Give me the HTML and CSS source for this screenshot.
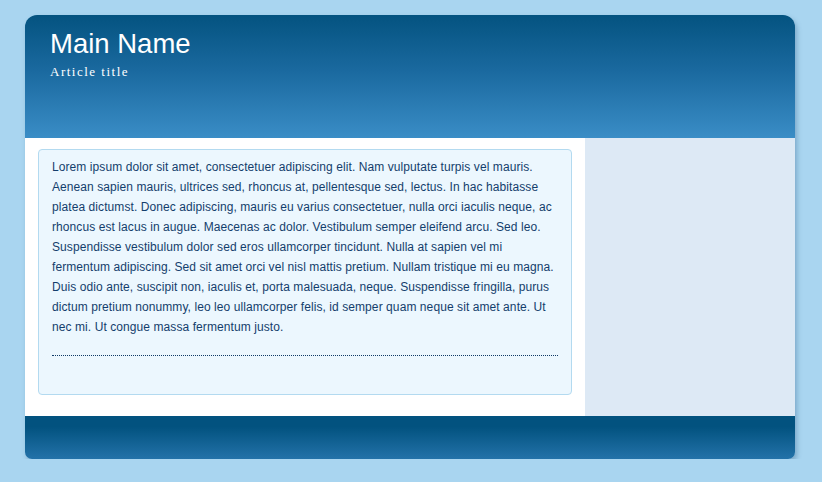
FILE: index.html
```html
<!DOCTYPE html>
<html>
<head>
<meta charset="utf-8">
<link rel="stylesheet" href="styles.css">
</head>
<body>
<div class="page">
  <header class="header">
    <h1 class="site-name">Main Name</h1>
    <div class="site-sub">Article title</div>
  </header>
  <div class="content">
    <main class="main">
      <div class="article">
        <p class="text">Lorem ipsum dolor sit amet, consectetuer adipiscing elit. Nam vulputate turpis vel mauris. Aenean sapien mauris, ultrices sed, rhoncus at, pellentesque sed, lectus. In hac habitasse platea dictumst. Donec adipiscing, mauris eu varius consectetuer, nulla orci iaculis neque, ac rhoncus est lacus in augue. Maecenas ac dolor. Vestibulum semper eleifend arcu. Sed leo. Suspendisse vestibulum dolor sed eros ullamcorper tincidunt. Nulla at sapien vel mi fermentum adipiscing. Sed sit amet orci vel nisl mattis pretium. Nullam tristique mi eu magna. Duis odio ante, suscipit non, iaculis et, porta malesuada, neque. Suspendisse fringilla, purus dictum pretium nonummy, leo leo ullamcorper felis, id semper quam neque sit amet ante. Ut nec mi. Ut congue massa fermentum justo.</p>
        <div class="rule"></div>
      </div>
    </main>
    <aside class="sidebar"></aside>
  </div>
  <footer class="footer"></footer>
</div>
</body>
</html>
```
FILE: styles.css
```css
html, body {
  margin: 0;
  padding: 0;
}
body {
  background: #a9d5f0;
  font-family: "Liberation Sans", Arial, sans-serif;
}
.page {
  width: 770px;
  margin: 15px 0 0 25px;
  border-radius: 12px 12px 7px 7px;
  box-shadow: 2px 3px 5px rgba(40, 90, 130, 0.35);
  display: flex;
  flex-direction: column;
}
.header {
  height: 123px;
  box-sizing: border-box;
  padding: 13px 25px 0;
  border-radius: 12px 12px 0 0;
  background: linear-gradient(to bottom, #045380 0%, #1a699f 45%, #3a8dc6 100%);
  color: #fff;
}
.site-name {
  margin: 0;
  font-family: "Liberation Sans", Arial, sans-serif;
  font-weight: normal;
  font-size: 27.5px;
  line-height: 32px;
}
.site-sub {
  margin-top: 4px;
  font-family: "Liberation Serif", "Times New Roman", serif;
  font-size: 13px;
  letter-spacing: 1.5px;
  line-height: 16px;
}
.content {
  display: flex;
  height: 278px;
}
.main {
  width: 560px;
  background: #fff;
  box-sizing: border-box;
  padding: 11px 13px 0;
}
.sidebar {
  flex: 1;
  background: #dde9f5;
}
.article {
  height: 246px;
  box-sizing: border-box;
  border: 1px solid #b3daf0;
  border-radius: 4px;
  background: #ecf7fe;
  padding: 7px 13px 0;
}
.text {
  margin: 0;
  font-size: 12px;
  letter-spacing: 0.08px;
  line-height: 20px;
  color: #143e6c;
}
.rule {
  margin-top: 18px;
  border-top: 1px dotted #0f3a66;
}
.footer {
  height: 43px;
  border-radius: 0 0 7px 7px;
  background: linear-gradient(to bottom, #02527f 0%, #02527f 25%, #2372a9 100%);
}
```
